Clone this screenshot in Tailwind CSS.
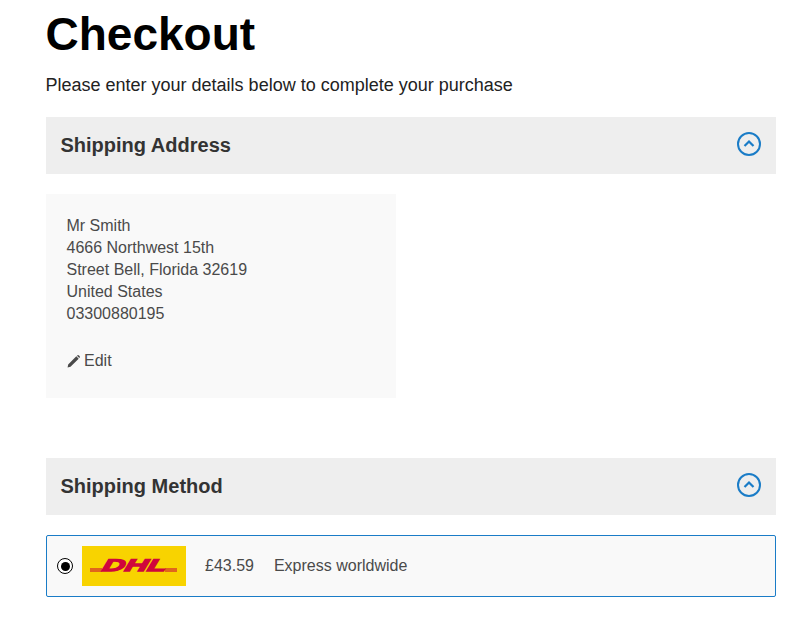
<!DOCTYPE html>
<html lang="en">
<head>
    <meta charset="UTF-8">
    <title>Checkout</title>
    <script src="https://cdn.jsdelivr.net/npm/@tailwindcss/browser@4"></script>
</head>
<body class="bg-white font-['Liberation_Sans',Arial,sans-serif] overflow-hidden">
    <div class="w-[730px] ml-[46px]">
        <h1 class="text-[46px] leading-[53px] font-bold text-black mt-[8px] -ml-[0.5px]">Checkout</h1>
        <p class="text-[18px] leading-[24px] text-[#222] mt-[12px] -ml-[0.5px]">Please enter your details below to complete your purchase</p>

        <!-- Shipping address -->
        <div class="h-[57px] mt-[20px] bg-[#eeeeee] flex items-center justify-between pl-[15px] pr-[15px]">
            <h2 class="text-[20px] font-bold text-[#333] mb-[2px] -ml-[0.5px]">Shipping Address</h2>
            <svg class="w-[24px] h-[24px] mb-[3px]" viewBox="0 0 24 24" fill="none" stroke="#1a7cc7" stroke-width="2">
                <circle cx="12" cy="12" r="11"/>
                <path d="M7.5 14 L12 9.5 L16.5 14" stroke-width="2.2"/>
            </svg>
        </div>
        <div class="w-[350px] h-[204px] mt-[20px] bg-[#f9f9f9] pt-[21px] pl-[20.5px] text-[16px] leading-[22px] text-[#4a4a4a]">
            <p>Mr Smith</p>
            <p>4666 Northwest 15th</p>
            <p>Street Bell, Florida 32619</p>
            <p>United States</p>
            <p>03300880195</p>
            <a class="flex items-center mt-[25px]">
                <svg class="w-[14px] h-[14px] mr-[3.5px]" viewBox="0 0 24 24" fill="#4a4a4a">
                    <path d="M1 23 L2 18 L16 4 L20 8 L6 22 Z M17.5 2.5 Q19 1 20.5 2.5 L21.5 3.5 Q23 5 21.5 6.5 L21 7 L17 3 Z"/>
                </svg>
                Edit
            </a>
        </div>

        <!-- Shipping method -->
        <div class="h-[57px] mt-[60px] bg-[#eeeeee] flex items-center justify-between pl-[15px] pr-[15px]">
            <h2 class="text-[20px] font-bold text-[#333] mb-[2px] -ml-[0.5px]">Shipping Method</h2>
            <svg class="w-[24px] h-[24px] mb-[3px]" viewBox="0 0 24 24" fill="none" stroke="#1a7cc7" stroke-width="2">
                <circle cx="12" cy="12" r="11"/>
                <path d="M7.5 14 L12 9.5 L16.5 14" stroke-width="2.2"/>
            </svg>
        </div>
        <div class="h-[62px] mt-[20px] bg-[#f9f9f9] border border-[#1a7cc7] rounded-[2px] flex items-center pl-[10px] text-[16px] text-[#4a4a4a]">
            <span class="w-[16px] h-[16px] rounded-full border-[1.5px] border-black bg-white flex items-center justify-center">
                <span class="w-[9px] h-[9px] rounded-full bg-black"></span>
            </span>
            <svg class="w-[104px] h-[40px] ml-[9px]" viewBox="0 0 104 40">
                <rect width="104" height="40" fill="#f8d300"/>
                <rect x="8" y="22" width="12" height="4" fill="#e0661c"/>
                <rect x="83" y="22" width="12" height="4" fill="#e0661c"/>
                <text x="52" y="25.5" text-anchor="middle" transform="translate(6 0) skewX(-14)" font-family="Liberation Sans" font-weight="bold" font-style="italic" font-size="17" textLength="64" lengthAdjust="spacingAndGlyphs" fill="#d0063c" stroke="#d0063c" stroke-width="1.3">DHL</text>
            </svg>
            <span class="ml-[19px]">£43.59</span>
            <span class="ml-[20px]">Express worldwide</span>
        </div>
    </div>
</body>
</html>
